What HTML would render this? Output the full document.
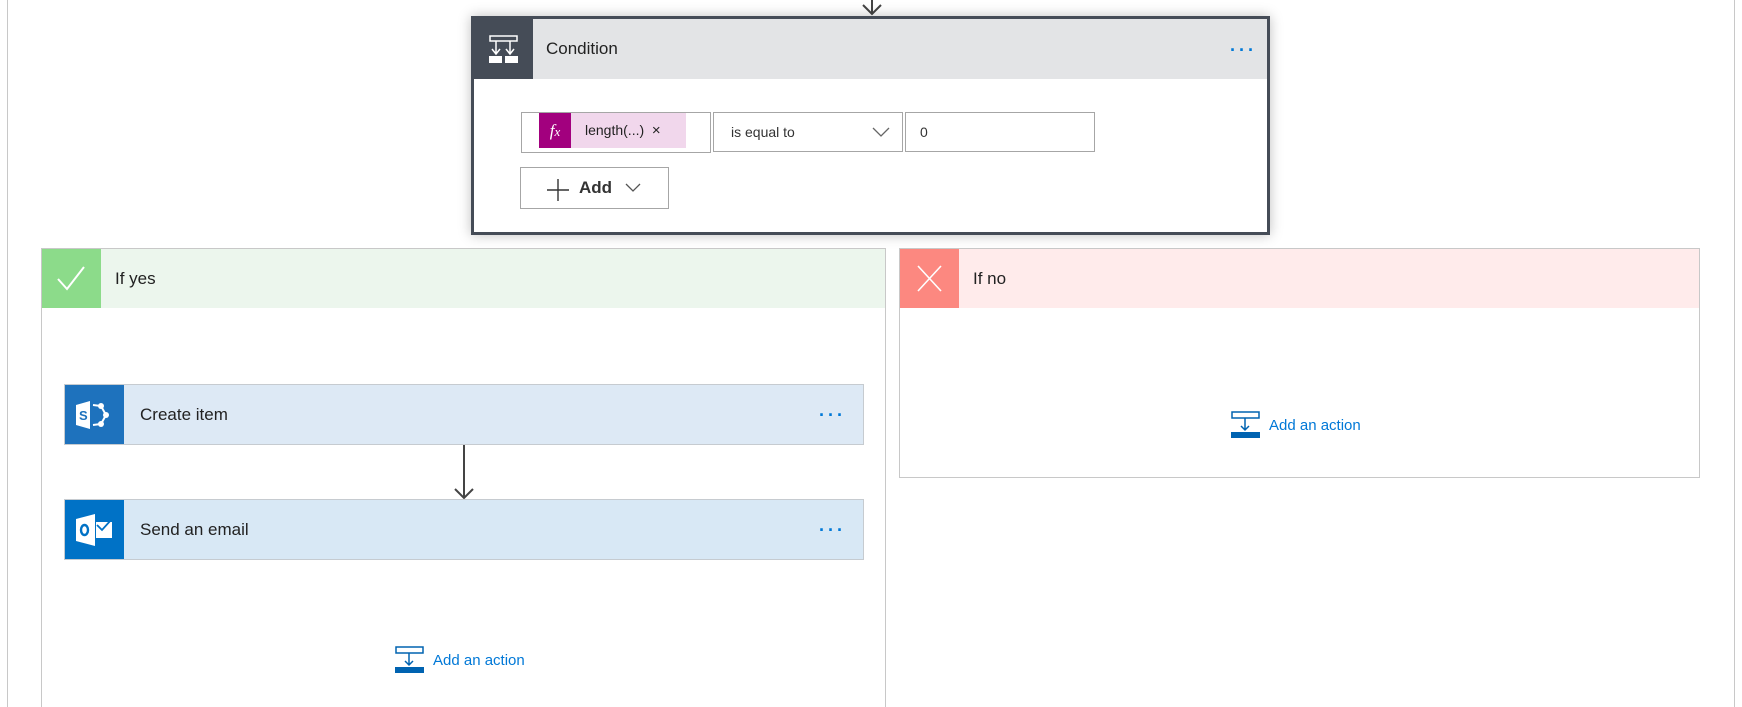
<!DOCTYPE html>
<html style="overflow:hidden"><head><meta charset="utf-8"><style>
*{box-sizing:border-box;margin:0;padding:0}
html,body{width:1742px;height:707px;overflow:hidden}
body{background:#fff;font-family:"Liberation Sans",sans-serif;position:relative;color:#222}
.a{position:absolute}
.frame{left:7px;top:0;width:1728px;height:707px;border-left:1px solid #c8c8c8;border-right:1px solid #c8c8c8}
.dots{position:absolute;font-size:18px;letter-spacing:3px;color:#0078d7;font-weight:bold;line-height:1}
.t{position:absolute;font-size:17px;color:#222}
.link{color:#0078d7;font-size:15px}
</style></head><body>
<div class="a frame"></div>
<svg class="a" style="left:860px;top:0" width="24" height="16"><path d="M12 0V14M3 5L12 14L21 5" stroke="#444" stroke-width="2" fill="none"/></svg>

<div class="a" style="left:471px;top:16px;width:799px;height:219px;border:3px solid #454c57;box-shadow:0 0 12px rgba(0,0,0,.25);background:#fff">
  <div class="a" style="left:0;top:0;width:793px;height:60px;background:#e3e4e6"></div>
  <div class="a" style="left:0;top:0;width:59px;height:60px;background:#454c57">
    <svg width="59" height="60"><g stroke="#fff" stroke-width="1.5" fill="none"><rect x="16" y="17" width="27" height="5"/><path d="M22 22V35M36 22V35M18 30L22 35L26 30M32 30L36 35L40 30"/></g><rect x="15" y="37" width="13" height="7" fill="#fff"/><rect x="31" y="37" width="13" height="7" fill="#fff"/></svg>
  </div>
  <div class="t" style="left:72px;top:20px;font-size:17px">Condition</div>
  <div class="dots" style="left:756px;top:22px">···</div>
  <div class="a" style="left:47px;top:93px;width:190px;height:41px;border:1px solid #a6a6a6"></div>
  <div class="a" style="left:65px;top:94px;width:32px;height:35px;background:#a2007e;color:#fff;font-family:'Liberation Serif',serif;font-style:italic;font-size:17px;text-align:center;line-height:35px">f<span style="font-size:13px">x</span></div>
  <div class="a" style="left:97px;top:94px;width:115px;height:35px;background:#f1d7ec;font-size:14px;line-height:35px;padding-left:14px">length(...) &nbsp;<span style="font-size:15px">×</span></div>
  <div class="a" style="left:239px;top:93px;width:190px;height:40px;border:1px solid #a6a6a6;font-size:14px;line-height:38px;padding-left:17px;color:#333">is equal to
    <svg class="a" style="left:158px;top:13px" width="18" height="12"><path d="M1 2L9 10L17 2" stroke="#666" stroke-width="1.3" fill="none"/></svg></div>
  <div class="a" style="left:431px;top:93px;width:190px;height:40px;border:1px solid #a6a6a6;font-size:14px;line-height:38px;padding-left:14px;color:#333">0</div>
  <div class="a" style="left:46px;top:148px;width:149px;height:42px;border:1px solid #a6a6a6">
    <svg class="a" style="left:26px;top:11px" width="22" height="22"><path d="M11 0V22M0 11H22" stroke="#333" stroke-width="1.4"/></svg>
    <div class="a" style="left:58px;top:10px;font-size:17px;font-weight:bold;color:#333">Add</div>
    <svg class="a" style="left:104px;top:15px" width="16" height="10"><path d="M1 1L8 8L15 1" stroke="#555" stroke-width="1.3" fill="none"/></svg>
  </div>
</div>

<div class="a" style="left:41px;top:248px;width:845px;height:462px;border:1px solid #c8c8c8;background:#fff">
  <div class="a" style="left:0;top:0;width:843px;height:59px;background:#ecf6ed"></div>
  <div class="a" style="left:0;top:0;width:59px;height:59px;background:#8cdb8a">
    <svg width="59" height="59"><path d="M16 30L25 40L42 18" stroke="#fff" stroke-width="2" fill="none"/></svg>
  </div>
  <div class="t" style="left:73px;top:20px">If yes</div>
  <div class="a" style="left:22px;top:135px;width:800px;height:61px;border:1px solid #c6cbd0;background:#dde9f5">
    <div class="a" style="left:0;top:0;width:59px;height:59px;background:#1e72bd">
      <svg width="59" height="59"><path d="M11 20L25 16V44L11 40Z" fill="#fff"/><text x="14" y="35" font-family="Liberation Sans" font-weight="bold" font-size="13" fill="#1e72bd">S</text><path d="M28 20L36 21L41 30L36 39L28 40" stroke="#fff" stroke-width="2" fill="none"/><circle cx="36" cy="21" r="3" fill="#fff"/><circle cx="41" cy="30" r="3" fill="#fff"/><circle cx="36" cy="39" r="3" fill="#fff"/></svg>
    </div>
    <div class="t" style="left:75px;top:20px">Create item</div>
    <div class="dots" style="left:754px;top:21px">···</div>
  </div>
  <svg class="a" style="left:410px;top:196px" width="24" height="56"><path d="M12 0V53M3 44L12 53L21 44" stroke="#444" stroke-width="2" fill="none"/></svg>
  <div class="a" style="left:22px;top:250px;width:800px;height:61px;border:1px solid #c6cbd0;background:#d8e8f5">
    <div class="a" style="left:0;top:0;width:59px;height:59px;background:#0072c6">
      <svg width="59" height="59"><path d="M11 19L30 14V46L11 41Z" fill="#fff"/><ellipse cx="19.5" cy="30" rx="3.5" ry="5" stroke="#0072c6" stroke-width="2.4" fill="none"/><path d="M31 22H47V38H31" fill="#fff"/><path d="M32 25L37 30L46 20" stroke="#0072c6" stroke-width="1.8" fill="none"/></svg>
    </div>
    <div class="t" style="left:75px;top:20px">Send an email</div>
    <div class="dots" style="left:754px;top:21px">···</div>
  </div>
  <svg class="a" style="left:353px;top:397px" width="30" height="28"><rect x="1" y="1" width="27" height="6" stroke="#0063b1" stroke-width="1.5" fill="#fff"/><path d="M14 7V19M10 15L14 19L18 15" stroke="#0063b1" stroke-width="1.5" fill="none"/><rect x="0" y="21" width="29" height="6" fill="#0063b1"/></svg>
  <div class="a link" style="left:391px;top:403px">Add an action</div>
</div>

<div class="a" style="left:899px;top:248px;width:801px;height:230px;border:1px solid #c8c8c8;background:#fff">
  <div class="a" style="left:0;top:0;width:799px;height:59px;background:#ffebeb"></div>
  <div class="a" style="left:0;top:0;width:59px;height:59px;background:#fc8880">
    <svg width="59" height="59"><path d="M18 17L41 42M41 17L18 42" stroke="#fff" stroke-width="1.6"/></svg>
  </div>
  <div class="t" style="left:73px;top:20px">If no</div>
  <svg class="a" style="left:331px;top:162px" width="30" height="28"><rect x="1" y="1" width="27" height="6" stroke="#0063b1" stroke-width="1.5" fill="#fff"/><path d="M14 7V19M10 15L14 19L18 15" stroke="#0063b1" stroke-width="1.5" fill="none"/><rect x="0" y="21" width="29" height="6" fill="#0063b1"/></svg>
  <div class="a link" style="left:369px;top:168px">Add an action</div>
</div>
</body></html>
